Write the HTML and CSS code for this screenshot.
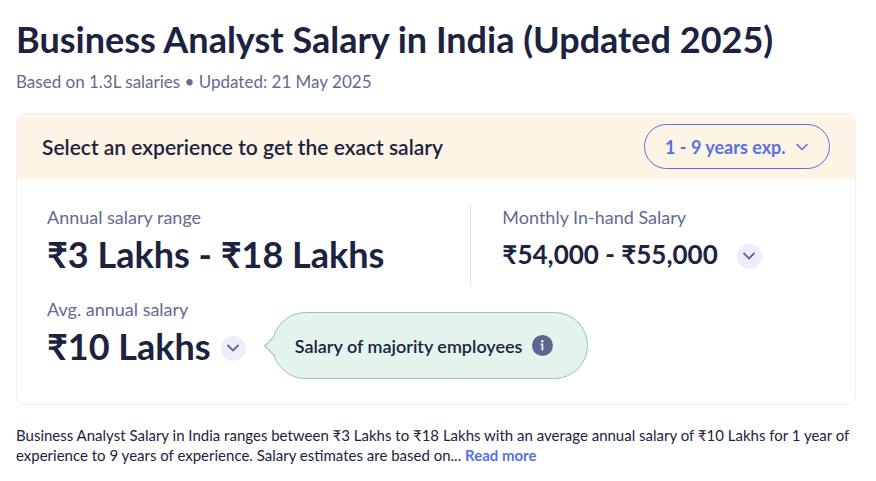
FILE: index.html
```html
<!DOCTYPE html>
<html lang="en">
<head>
    <meta charset="UTF-8">
    <meta name="viewport" content="width=device-width, initial-scale=1">
    <title>Business Analyst Salary in India</title>
    <link rel="stylesheet" href="styles.css">
</head>
<body>
<main class="page">
    <h1 class="title">Business Analyst Salary in India (Updated 2025)</h1>
    <p class="subtitle">Based on 1.3L salaries • Updated: 21 May 2025</p>

    <section class="card">
        <div class="card-header">
            <label class="card-heading" for="experience">Select an experience to get the exact salary</label>
            <div class="exp">
                <select class="exp-select" id="experience">
                    <option>1 - 9 years exp.</option>
                </select>
                <svg class="exp-arrow" width="14" height="8" viewBox="0 0 14 8"><path d="M1.5 1 7 6.5 12.5 1"/></svg>
            </div>
        </div>
        <div class="card-body">
            <div class="row-range">
                <div class="range">
                    <p class="label">Annual salary range</p>
                    <p class="amount">₹3 Lakhs - ₹18 Lakhs</p>
                </div>
                <div class="monthly">
                    <p class="label">Monthly In-hand Salary</p>
                    <div class="amount-line">
                        <p class="amount amount-small">₹54,000 - ₹55,000</p>
                        <button class="toggle" type="button" aria-label="Show monthly details">
                            <svg width="14" height="8" viewBox="0 0 14 8"><path d="M1.5 1 7 6.5 12.5 1"/></svg>
                        </button>
                    </div>
                </div>
            </div>
            <div class="row-average">
                <div class="average">
                    <p class="label">Avg. annual salary</p>
                    <div class="amount-line">
                        <p class="amount">₹10 Lakhs</p>
                        <button class="toggle" type="button" aria-label="Show annual details">
                            <svg width="14" height="8" viewBox="0 0 14 8"><path d="M1.5 1 7 6.5 12.5 1"/></svg>
                        </button>
                    </div>
                </div>
                <div class="bubble">
                    <span>Salary of majority employees</span>
                    <svg width="21" height="21" viewBox="0 0 21 21">
                        <circle cx="10.5" cy="10.5" r="10.5" fill="#5e6691"/>
                        <circle cx="10.3" cy="6.2" r="1.3" fill="#e4f4ec"/>
                        <path d="M8.6 9.3h1.8v6" fill="none" stroke="#e4f4ec" stroke-width="1.8"/>
                    </svg>
                </div>
            </div>
        </div>
    </section>

    <p class="summary">Business Analyst Salary in India ranges between ₹3 Lakhs to ₹18 Lakhs with an average annual salary of ₹10 Lakhs for 1 year of experience to 9 years of experience. Salary estimates are based on... <a class="more" href="#">Read more</a></p>
</main>
</body>
</html>
```
FILE: styles.css
```css
* {
    box-sizing: border-box;
}

body {
    margin: 0;
    background: #fff;
    color: #1b2340;
    font-family: Lato, "Noto Sans", sans-serif;
}

h1, p {
    margin: 0;
}

.page {
    padding: 15px 20px 15px 16px;
}

.title {
    font-size: 36px;
    line-height: 48px;
    font-weight: 700;
}

.subtitle {
    margin-top: 7px;
    font-size: 17px;
    line-height: 24px;
    color: #626a93;
}

.card {
    margin-top: 19px;
    border: 1px solid #f0f0f3;
    border-radius: 8px;
    overflow: hidden;
}

.card-header {
    display: flex;
    justify-content: space-between;
    align-items: center;
    padding: 10px 25px;
    background: #fef4e5;
}

.card-heading {
    font-size: 21px;
    line-height: 24px;
    font-weight: 600;
}

.exp {
    display: grid;
    align-items: center;
}

.exp-select {
    grid-area: 1 / 1;
    appearance: none;
    width: 186px;
    height: 45px;
    padding: 0 20px;
    border: 1px solid #5670e6;
    border-radius: 23px;
    background: transparent;
    color: #5670e6;
    font-family: inherit;
    font-size: 18px;
    font-weight: 700;
}

.exp-arrow {
    grid-area: 1 / 1;
    justify-self: end;
    margin-right: 21px;
    fill: none;
    stroke: #5670e6;
    stroke-width: 1.5;
    pointer-events: none;
}

.card-body {
    padding: 25px 30px;
}

.row-range {
    display: grid;
    grid-template-columns: 6fr 5fr;
}

.row-average {
    display: flex;
    align-items: flex-end;
    gap: 26px;
    margin-top: 10px;
}

.range {
    min-height: 82px;
    border-right: 1px solid #e3e4ec;
}

.monthly {
    padding-left: 31px;
}

.average {
    padding-bottom: 9px;
}

.label {
    font-size: 18px;
    line-height: 26px;
    color: #626a93;
}

.amount {
    font-size: 36px;
    line-height: 48px;
    font-weight: 700;
}

.amount-small {
    font-size: 26px;
}

.amount-line {
    display: flex;
    align-items: center;
    gap: 10px;
}

.monthly .amount-line {
    gap: 19px;
}

.toggle {
    display: flex;
    align-items: center;
    justify-content: center;
    width: 25px;
    height: 25px;
    margin-top: 4px;
    padding: 0;
    border: 0;
    border-radius: 50%;
    background: #edeefa;
}

.toggle svg {
    fill: none;
    stroke: #5e6691;
    stroke-width: 1.8;
}

.bubble {
    position: relative;
    display: flex;
    align-items: center;
    gap: 10px;
    height: 67px;
    padding: 0 34px 0 22px;
    border: 1px solid #8dcab1;
    border-radius: 34px;
    background: #e4f4ec;
    font-size: 18px;
    font-weight: 600;
}

/* pointer towards the average salary */
.bubble::before {
    content: "";
    position: absolute;
    left: -6px;
    top: 26px;
    width: 13px;
    height: 13px;
    border-left: 1px solid #8dcab1;
    border-bottom: 1px solid #8dcab1;
    background: #e4f4ec;
    transform: rotate(45deg);
}

.summary {
    margin-top: 20px;
    font-size: 15px;
    line-height: 20px;
}

.more {
    color: #5670e6;
    font-weight: 700;
    text-decoration: none;
}
```
